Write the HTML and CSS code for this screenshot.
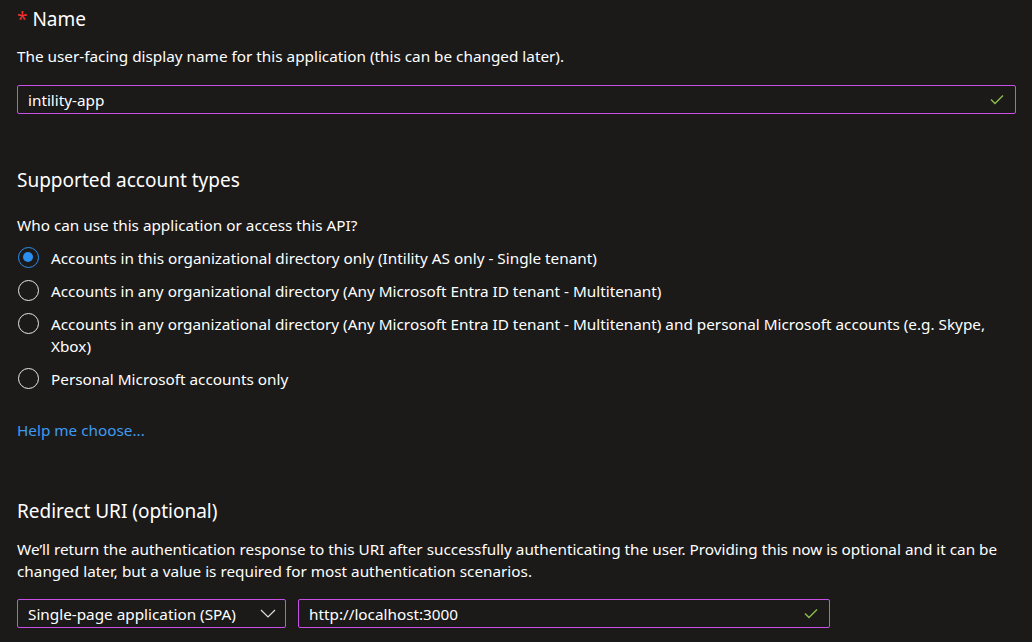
FILE: index.html
```html
<!DOCTYPE html>
<html lang="en">
<head>
<meta charset="utf-8">
<link rel="stylesheet" href="styles.css">
</head>
<body>
<main class="form">
  <h2 class="heading heading-name"><span class="req">*</span> Name</h2>
  <p class="desc desc-name">The user-facing display name for this application (this can be changed later).</p>
  <div class="field field-name">
    <span class="field-text">intility-app</span>
    <svg class="check" width="14" height="11" viewBox="0 0 14 11"><path d="M1 5.5 L5 9.5 L13 1.5" fill="none" stroke="#8cbd4d" stroke-width="1.4"/></svg>
  </div>

  <h2 class="heading heading-types">Supported account types</h2>
  <p class="desc desc-who">Who can use this application or access this API?</p>
  <div class="radios">
    <div class="radio-row"><span class="radio checked"></span><span class="radio-label">Accounts in this organizational directory only (Intility AS only - Single tenant)</span></div>
    <div class="radio-row"><span class="radio"></span><span class="radio-label">Accounts in any organizational directory (Any Microsoft Entra ID tenant - Multitenant)</span></div>
    <div class="radio-row"><span class="radio"></span><span class="radio-label">Accounts in any organizational directory (Any Microsoft Entra ID tenant - Multitenant) and personal Microsoft accounts (e.g. Skype, Xbox)</span></div>
    <div class="radio-row"><span class="radio"></span><span class="radio-label">Personal Microsoft accounts only</span></div>
  </div>
  <a class="help" href="#">Help me choose...</a>

  <h2 class="heading heading-redirect">Redirect URI (optional)</h2>
  <p class="desc desc-redirect">We’ll return the authentication response to this URI after successfully authenticating the user. Providing this now is optional and it can be changed later, but a value is required for most authentication scenarios.</p>
  <div class="uri-row">
    <div class="field select">
      <span class="field-text">Single-page application (SPA)</span>
      <svg class="chevron" width="16" height="9" viewBox="0 0 16 9"><path d="M1 1 L8 8 L15 1" fill="none" stroke="#e0e0e0" stroke-width="1.2"/></svg>
    </div>
    <div class="field uri">
      <span class="field-text">http://localhost:3000</span>
      <svg class="check" width="14" height="11" viewBox="0 0 14 11"><path d="M1 5.5 L5 9.5 L13 1.5" fill="none" stroke="#8cbd4d" stroke-width="1.4"/></svg>
    </div>
  </div>
</main>
</body>
</html>
```

FILE: styles.css
```css
* { box-sizing: border-box; }
html, body {
  margin: 0;
  background: #1b1a19;
  color: #ffffff;
  font-family: "Noto Sans", "Open Sans", sans-serif;
  font-size: 15.3px;
}
.form {
  padding: 5px 16px 0 17px;
}
.heading {
  margin: 0;
  font-size: 19px;
  font-weight: 400;
  line-height: 28px;
}
.req { color: #f1302f; }
.desc {
  margin: 0;
  line-height: 20px;
}
.desc-name { margin-top: 13px; }
.field {
  display: flex;
  align-items: center;
  justify-content: space-between;
  height: 29px;
  border: 1px solid #c94fe8;
  border-radius: 2px;
  padding: 0 11px 0 10px;
}
.field-name { margin-top: 19px; }
.heading-types { margin-top: 52px; }
.desc-who { margin-top: 21px; }
.radios {
  margin-top: 12px;
  display: flex;
  flex-direction: column;
  gap: 11px;
}
.radio-row {
  display: flex;
  align-items: flex-start;
  gap: 12px;
  padding-left: 1px;
  line-height: 22px;
}
.radio {
  flex: none;
  width: 21px;
  height: 21px;
  border: 1.5px solid #e8e8e8;
  border-radius: 50%;
  position: relative;
}
.radio.checked { border-color: #2a8ff0; }
.radio.checked::after {
  content: "";
  position: absolute;
  left: 4px; top: 4px;
  width: 10px; height: 10px;
  border-radius: 50%;
  background: #2a8ff0;
}
.help {
  display: block;
  margin-top: 30px;
  line-height: 20px;
  color: #3f9bf2;
  text-decoration: none;
}
.heading-redirect { margin-top: 57px; }
.desc-redirect { margin-top: 13px; line-height: 22px; }
.uri-row {
  display: flex;
  gap: 12px;
  margin-top: 17px;
}
.select { width: 269px; }
.uri { width: 532px; }
.chevron { margin-right: -2px; }
```
